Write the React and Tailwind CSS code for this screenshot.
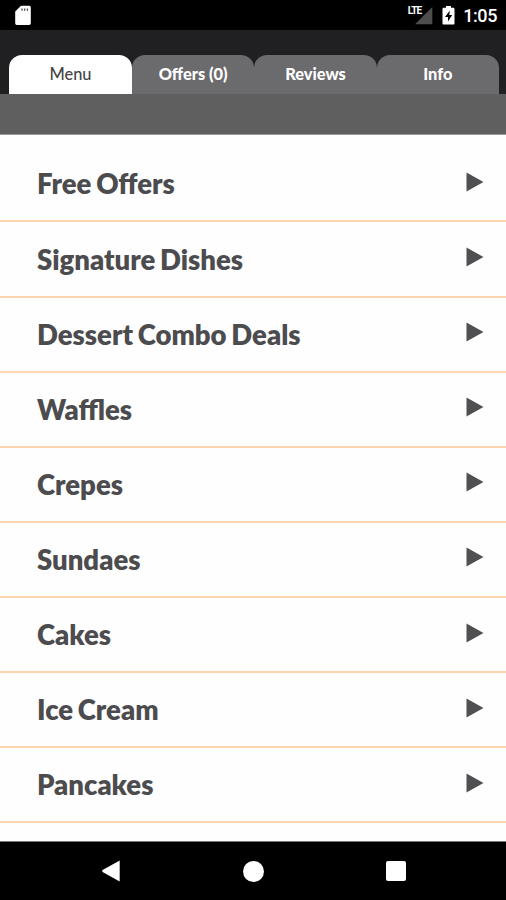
import clsx from 'clsx'

const tabs = ['Menu', 'Offers (0)', 'Reviews', 'Info']

const categories = [
  'Free Offers',
  'Signature Dishes',
  'Dessert Combo Deals',
  'Waffles',
  'Crepes',
  'Sundaes',
  'Cakes',
  'Ice Cream',
  'Pancakes',
]

function StatusBar() {
  return (
    <div className="flex h-[30px] shrink-0 items-start justify-between bg-black">
      <svg className="mt-[5px] ml-[14px]" width="18" height="21" viewBox="0 0 18 21">
        <path d="M7 .8h8.2a1.6 1.6 0 0 1 1.6 1.6v15.9a1.6 1.6 0 0 1-1.6 1.6H2.8a1.6 1.6 0 0 1-1.6-1.6V6.6z" fill="#fff" />
        <path d="M8 3.4v2.4M10.7 3.4v2.4M13.4 3.4v2.4" stroke="#555" strokeWidth="1.3" />
      </svg>
      <div className="flex items-start pr-[9px] text-white">
        <span className="mt-[5px] -mr-[6px] font-[Roboto] text-[10px] leading-[11px] font-bold tracking-[-0.9px]">LTE</span>
        <svg className="mt-[7px]" width="18" height="18" viewBox="0 0 18 18">
          <path d="M17.3 0v17.3H0z" fill="#4d4d4d" />
        </svg>
        <svg className="mt-[5px] ml-[9px]" width="13" height="20" viewBox="0 0 13 20">
          <path d="M4 1h5v1.8h2.4c.6 0 1.1.5 1.1 1.1v14.5c0 .6-.5 1.1-1.1 1.1H1.6c-.6 0-1.1-.5-1.1-1.1V3.9c0-.6.5-1.1 1.1-1.1H4z" fill="#fff" />
          <path d="M7.8 5.5 3 12h3v4.5L10.2 10H7.3z" fill="#000" />
        </svg>
        <span className="mt-[5px] ml-[8px] font-[Roboto] text-[18px] leading-[21px] font-medium tracking-[-0.4px]">1:05</span>
      </div>
    </div>
  )
}

function Tabs() {
  return (
    <div className="flex h-[64px] shrink-0 items-end bg-[#202022] pr-[7px] pl-[9px]">
      {tabs.map((tab, i) => (
        <button
          key={tab}
          className={clsx(
            'h-[39px] rounded-t-[13px] pb-[2px] text-[16.4px] leading-[37px]',
            i === 0
              ? 'w-[123px] bg-white text-[#444] font-medium'
              : 'flex-1 bg-[#6b6b6d] text-white font-black'
          )}
        >
          {tab}
        </button>
      ))}
    </div>
  )
}

function CategoryRow({ name }) {
  return (
    <li className="flex h-[75.1px] shrink-0 items-center justify-between border-b-2 border-[#fdd5b0] pr-[22px] pb-[1px] pl-[37px]">
      <span className="mt-[2px] text-[27.5px] leading-[36px] font-extrabold text-[#4c4c4f] [word-spacing:-1.6px]">{name}</span>
      <svg className="mb-[3px]" width="18" height="20" viewBox="0 0 18 20">
        <path d="M.5.5 17.5 10 .5 19.5z" fill="#505052" />
      </svg>
    </li>
  )
}

function NavBar() {
  return (
    <div className="flex h-[59px] shrink-0 items-center justify-between border-t border-[#777] bg-black pr-[100px] pl-[101px]">
      <svg width="20" height="22" viewBox="0 0 20 22">
        <path d="M18.7.6v20.8L1.6 11.9q-1-.9 0-1.8z" fill="#fff" />
      </svg>
      <div className="size-[21px] rounded-full bg-white" />
      <div className="size-[20px] rounded-[2px] bg-white" />
    </div>
  )
}

export default function App() {
  return (
    <div className="flex h-[900px] w-[506px] flex-col overflow-hidden bg-white font-[Lato,sans-serif]">
      <StatusBar />
      <Tabs />
      <div className="h-[41px] shrink-0 border-b border-[#999] bg-[#5f5f5f]" />
      <ul className="flex min-h-0 flex-1 flex-col overflow-hidden bg-[#fefefe] pt-[12.4px]">
        {categories.map((name) => (
          <CategoryRow key={name} name={name} />
        ))}
      </ul>
      <NavBar />
    </div>
  )
}
